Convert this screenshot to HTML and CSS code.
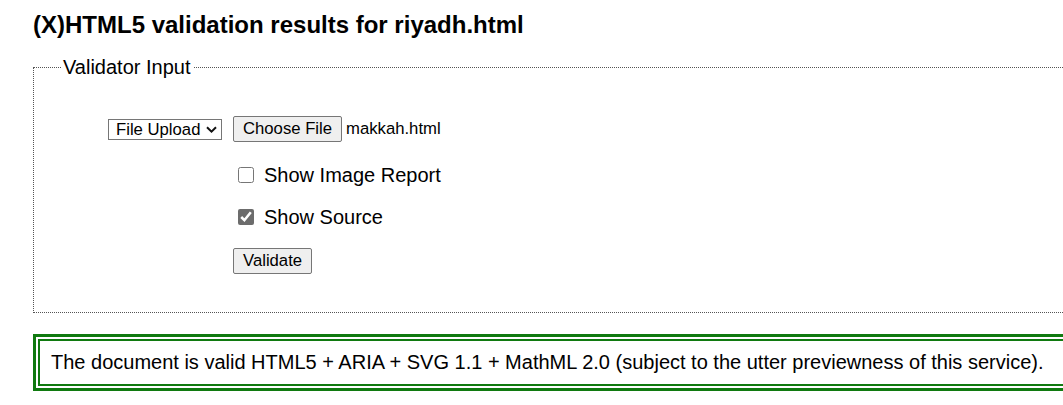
FILE: index.html
```html
<!DOCTYPE html>
<html lang="en">
<head>
<meta charset="utf-8">
<title>(X)HTML5 validation results</title>
<link rel="stylesheet" href="styles.css">
</head>
<body>
<h2 class="title">(X)HTML5 validation results for riyadh.html</h2>
<form class="form">
  <fieldset class="input-set">
    <legend class="legend">Validator Input</legend>
    <div class="grid">
      <div class="cell-label">
        <span class="select-wrap">
          <select class="mode">
            <option>File Upload</option>
          </select>
          <svg class="chevron" width="11" height="7" viewBox="0 0 11 7" aria-hidden="true"><path d="M1 1.2 L5.5 5.6 L10 1.2" fill="none" stroke="#111" stroke-width="2"/></svg>
        </span>
      </div>
      <div class="file-row">
        <button type="button" class="btn">Choose File</button>
        <span class="file-name">makkah.html</span>
      </div>
      <div></div>
      <label class="check check-first"><input type="checkbox" class="box"> Show Image Report</label>
      <div></div>
      <label class="check check-second"><input type="checkbox" class="box" checked> Show Source</label>
      <div></div>
      <div class="submit-row"><button type="button" class="btn">Validate</button></div>
    </div>
  </fieldset>
</form>
<div class="success">
  <p class="success-text">The document is valid HTML5 + ARIA + SVG 1.1 + MathML 2.0 (subject to the utter previewness of this service).</p>
</div>
</body>
</html>
```
FILE: styles.css
```css
html {
  overflow: hidden;
}
body {
  margin: 0;
  padding: 11px 0 0 33px;
  font-family: "Liberation Sans", Arial, sans-serif;
  font-size: 20px;
  color: #000;
  background: #fff;
  width: 1060px;
}
.title {
  margin: 0 0 17px;
  font-size: 24px;
  font-weight: bold;
  line-height: 28px;
}
.form {
  margin: 0;
}
.input-set {
  margin: 0;
  border: 1px dotted #555;
  padding: 0 0 38px 0;
  min-width: 0;
}
.legend {
  margin-left: 27px;
  padding: 0 2px;
  font-size: 20px;
  line-height: 23px;
}
.grid {
  display: grid;
  grid-template-columns: 199px auto;
  align-items: center;
  padding-top: 37px;
}
.cell-label {
  padding-right: 11px;
  display: flex;
  justify-content: flex-end;
  align-items: center;
}
.select-wrap {
  position: relative;
  display: inline-flex;
}
.mode {
  appearance: none;
  -webkit-appearance: none;
  font-family: "Liberation Sans", Arial, sans-serif;
  font-size: 16.7px;
  line-height: 19px;
  height: 21px;
  width: 114px;
  border: 1px solid #767676;
  border-radius: 0;
  background: #fff;
  color: #000;
  padding: 0 0 0 7px;
  margin: 0;
}
.chevron {
  position: absolute;
  right: 5px;
  top: 7px;
  pointer-events: none;
}
.file-row {
  display: flex;
  align-items: center;
  gap: 4px;
  height: 26px;
}
.btn {
  font-family: "Liberation Sans", Arial, sans-serif;
  font-size: 16.7px;
  height: 26px;
  padding: 0 9px;
  background: #efefef;
  border: 1px solid #767676;
  border-radius: 2px;
  color: #000;
}
.file-name {
  font-size: 16.7px;
}
.check {
  display: flex;
  align-items: center;
  gap: 10px;
  font-size: 20px;
  line-height: 26px;
  height: 26px;
}
.check-first {
  margin-top: 20px;
}
.check-second {
  margin-top: 16px;
}
.submit-row {
  margin-top: 18px;
  height: 26px;
}
.box {
  width: 16px;
  height: 16px;
  margin: 0 0 0 5px;
  accent-color: #6c6c6c;
}
.success {
  margin-top: 21px;
  border: 3px solid #107a10;
  box-shadow: inset 0 0 0 2px #fff, inset 0 0 0 4px #107a10;
  padding: 4px;
}
.success-text {
  margin: 0;
  padding: 10px 11px 10px 11px;
  font-size: 20px;
  line-height: 23px;
  white-space: nowrap;
}
```
